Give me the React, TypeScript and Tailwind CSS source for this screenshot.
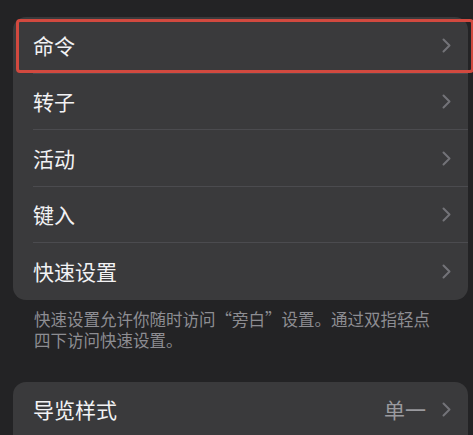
import React from "react";

const font = { fontFamily: '"Noto Sans CJK SC", "Noto Sans", sans-serif' };

function Chevron() {
  return (
    <svg width="9" height="15" viewBox="0 0 9 15" className="shrink-0">
      <path d="M1.5 1.5 L7.5 7.5 L1.5 13.5" fill="none" stroke="#737378" strokeWidth="2" strokeLinecap="round" strokeLinejoin="round" />
    </svg>
  );
}

function Row({ label, value, last, highlight }: { label: string; value?: string; last?: boolean; highlight?: boolean }) {
  return (
    <div className="relative flex h-[56.5px] items-center pl-5 pr-[17px]">
      <div className="flex-1 text-[21px] leading-none text-[#f2f2f4]">{label}</div>
      {value && <div className="mr-[16px] text-[21px] leading-none text-[#9a9a9f]">{value}</div>}
      <Chevron />
      {!last && <div className="absolute bottom-0 left-5 right-0 h-px bg-[#4b4b4f]" />}
      {highlight && (
        <div className="pointer-events-none absolute left-[3px] right-[-6px] top-[2px] bottom-[1px] rounded-[4px] border-[3px] border-[#d2493f]" />
      )}
    </div>
  );
}

export default function App() {
  return (
    <div className="h-[435px] w-[473px] overflow-hidden bg-[#232325] pt-[17px]" style={font}>
      <div className="ml-[13px] mr-[5px] rounded-[13px] bg-[#3a3a3c]">
        <Row label="命令" highlight />
        <Row label="转子" />
        <Row label="活动" />
        <Row label="键入" />
        <Row label="快速设置" last />
      </div>
      <p className="mt-[9px] pl-[34px] pr-[30px] text-[16.5px] leading-[21px] text-[#8d8d92]">
        快速设置允许你随时访问“旁白”设置。通过双指轻点四下访问快速设置。
      </p>
      <div className="mt-[31px] ml-[13px] mr-[5px] rounded-[13px] bg-[#3a3a3c] pb-4">
        <Row label="导览样式" value="单一" last />
      </div>
    </div>
  );
}
